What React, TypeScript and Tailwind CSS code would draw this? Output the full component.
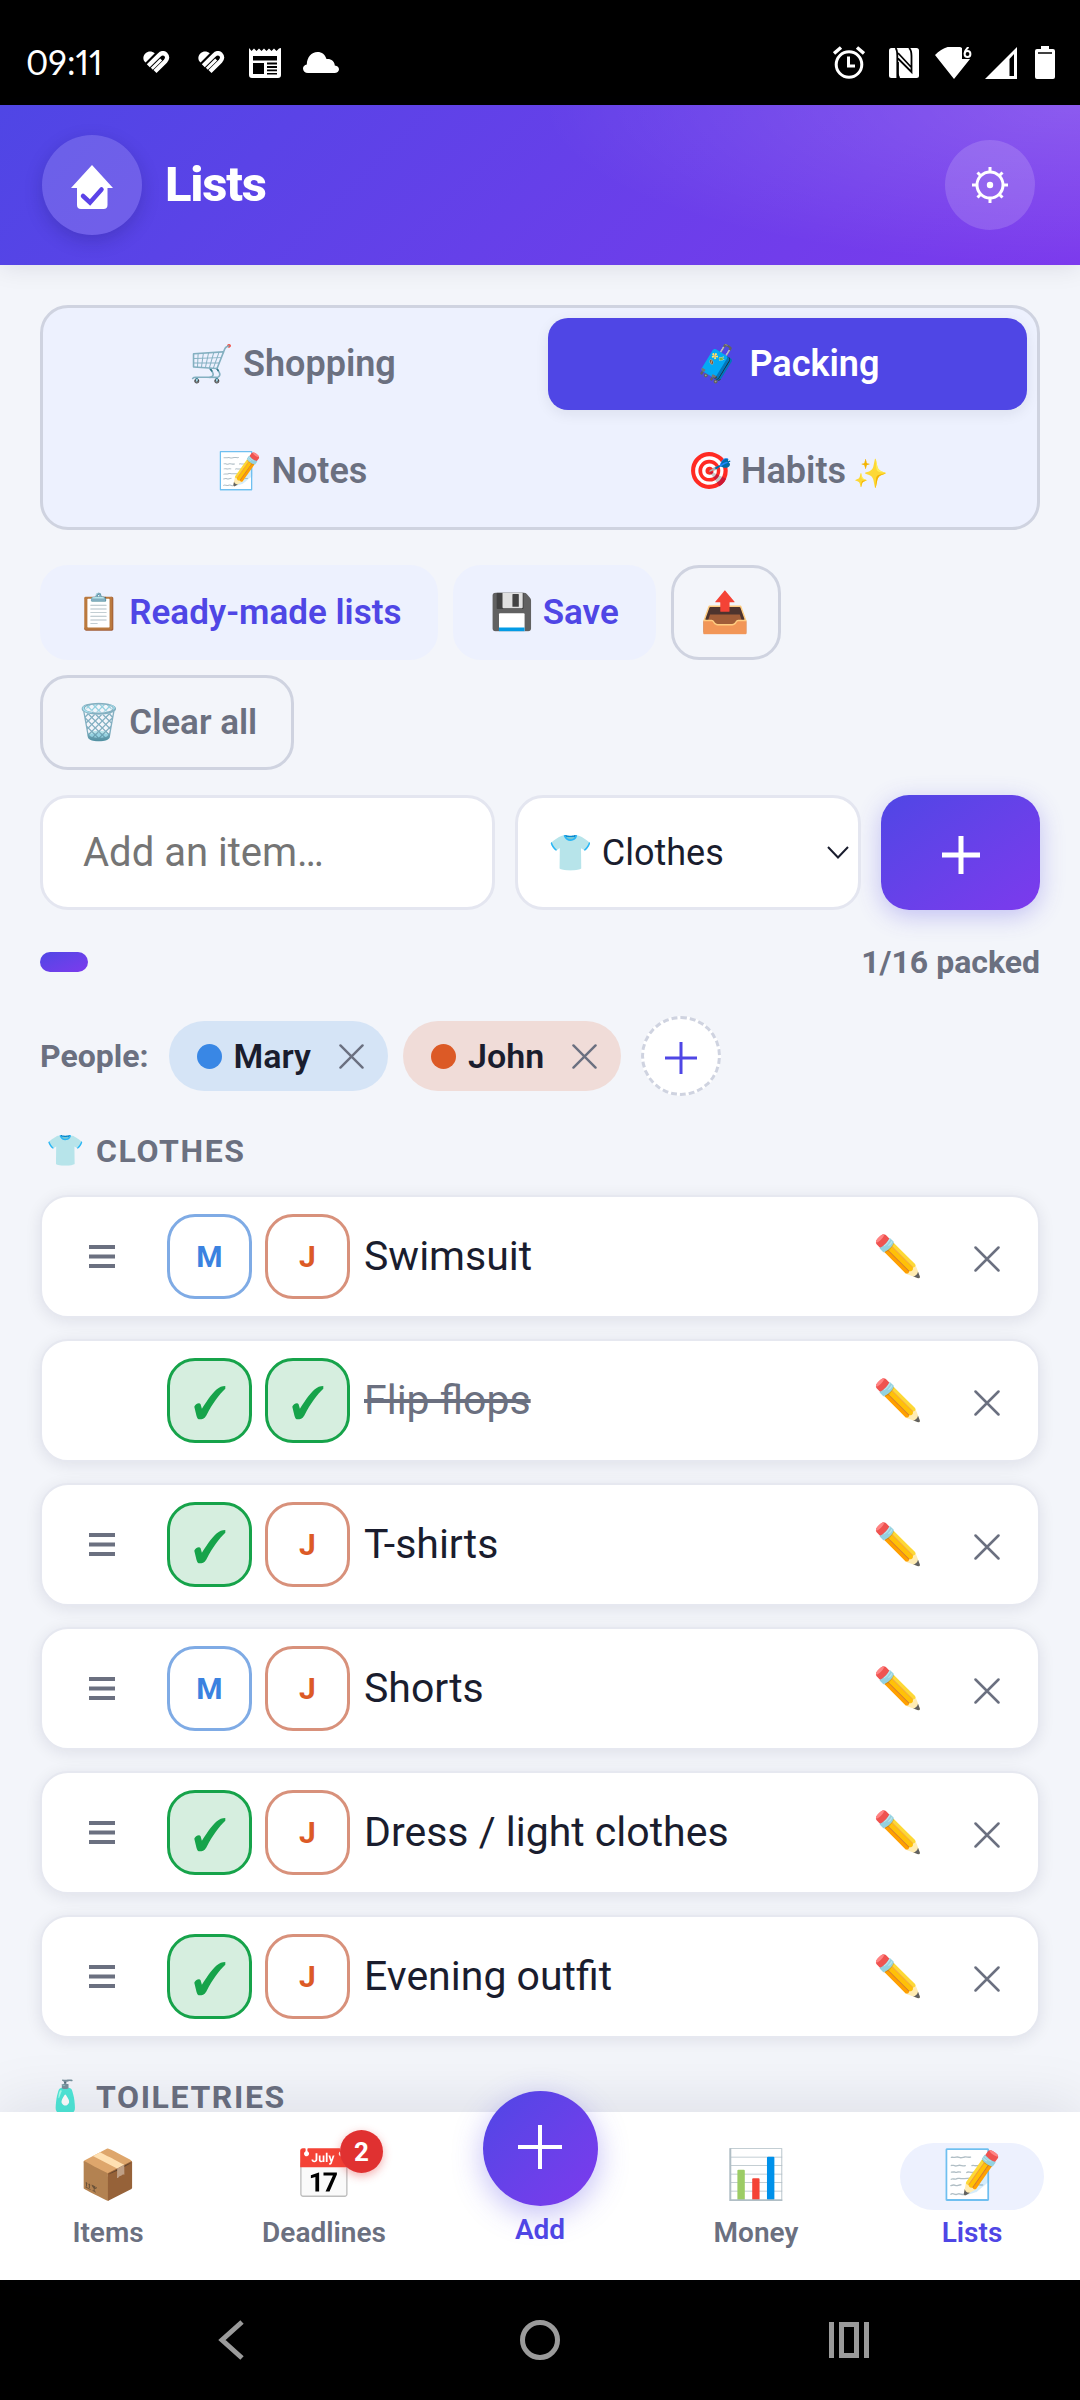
import { useState } from 'react';
import type { ReactNode } from 'react';
import { clsx } from 'clsx';

const TABS = [
  { id: 'shopping', icon: '🛒', label: 'Shopping' },
  { id: 'packing', icon: '🧳', label: 'Packing' },
  { id: 'notes', icon: '📝', label: 'Notes' },
  { id: 'habits', icon: '🎯', label: 'Habits', sparkle: true },
];

const CATEGORIES = ['👕 Clothes', '🧴 Toiletries', '🔌 Electronics', '📄 Documents'];

type Item = { name: string; mary: boolean; john: boolean };

const CLOTHES: Item[] = [
  { name: 'Swimsuit', mary: false, john: false },
  { name: 'Flip flops', mary: true, john: true },
  { name: 'T-shirts', mary: true, john: false },
  { name: 'Shorts', mary: false, john: false },
  { name: 'Dress / light clothes', mary: true, john: false },
  { name: 'Evening outfit', mary: true, john: false },
];

const TOTAL = 16;

const Cross = ({ size }: { size: number }) => (
  <svg width={size} height={size} viewBox="0 0 26 26" fill="none" stroke="currentColor" strokeWidth="2.5" strokeLinecap="round">
    <path d="M1.5 1.5 24.5 24.5M24.5 1.5 1.5 24.5" />
  </svg>
);

const Plus = ({ size, width }: { size: number; width: number }) => (
  <svg width={size} height={size} viewBox={`0 0 ${size} ${size}`} stroke="currentColor" strokeWidth={width}>
    <path d={`M${size / 2} 0V${size}M0 ${size / 2}H${size}`} />
  </svg>
);

const CheckMark = () => (
  <svg width="32" height="34" viewBox="0 0 32 34" fill="currentColor">
    <path d="M.3 20.800C1 18.300 5.500 15.800 6.600 18.300L7.900 22.800C12 16.500 17 8.500 22.500 3.600C25.500 .8 28 .2 31.300 0V2.800C25.500 8 18 18.500 13 28.300C10.800 32.600 9.300 33.300 6.500 33.300C3.600 33.300 3.300 32.500 2.400 29.500Z" />
  </svg>
);

/* Android status bar icons */
const HandHeart = () => (
  <svg width="27" height="24" viewBox="0 0 27 24" fill="none" stroke="#fff">
    <path d="M2.600 11.600C-.8 9 0 4.300 2.600 2.200C5.300-.2 8.800-.2 11.800 2.300Z" fill="#fff" stroke="none" />
    <path d="M5.300 14.700 16 4.200C18.500 1.700 21 1.800 22.800 3.400C24.700 5.300 24.500 8 22.400 10.200L12 20.600" strokeWidth="4.300" />
    <path d="M8.800 17.800 18.200 8.500" strokeWidth="2.900" />
  </svg>
);

const Newspaper = () => (
  <svg width="32" height="30" viewBox="0 0 32 30">
    <path d="M0 0 2.5 3 5 .5 7.5 3 10 .5 12.5 3 15 .5 17.5 3 20 .5 22.5 3 25 .5 27.5 3 30 .5 32 0V27Q32 30 29 30H3Q0 30 0 27Z" fill="#fff" />
    <path d="M4 8H28V12.5H4ZM4 15H15V26H4ZM18 14.5H28V16.5H18ZM18 18H28V20H18ZM18 21.5H28V23.3H18ZM18 25H28V26.5H18Z" fill="#000" />
  </svg>
);

const Cloud = () => (
  <svg width="36" height="21" viewBox="0 0 36 21" fill="#fff">
    <path d="M5 21C2 21 0 19 0 16.500C0 14.500 1.500 13 3.800 12.500C4 5 8.500 0 14.500 0C19 0 22 2.500 23.500 7C28 6.500 31.500 9 31.800 13.500C34.500 13.800 36 15.300 36 17.300C36 19.500 34 21 31.500 21Z" />
  </svg>
);

const StatusBar = () => (
  <div className="flex h-[105px] shrink-0 items-center justify-between bg-black pt-5 pl-[26px] pr-[25px] text-white">
    <div className="flex items-center">
      <span className="w-[90px] font-[Lato,sans-serif] text-[34px] proportional-nums">09:11</span>
      <span className="ml-[27px]"><HandHeart /></span>
      <span className="ml-7"><HandHeart /></span>
      <span className="ml-6"><Newspaper /></span>
      <span className="ml-[22px]"><Cloud /></span>
    </div>
    <div className="flex items-center">
      <svg width="32" height="33" viewBox="0 0 32 33" fill="none" stroke="#fff" strokeWidth="3">
        <circle cx="16" cy="18.500" r="12.800" />
        <path d="M15.500 10.500V20H22" />
        <path d="M1 7.500 8 1.500M31 7.500 24 1.500" strokeWidth="3.500" />
      </svg>
      <svg className="ml-6" width="30" height="30" viewBox="0 0 30 30">
        <rect width="30" height="30" rx="2.500" fill="#fff" />
        <path d="M6.500 0C8 1.500 8.300 4 8.300 8V30M20 0C22 1.500 22.500 4 22.500 8V24L9 10.500M9 5 22 19M9 14V26C9 28 9.500 29 10.500 30" fill="none" stroke="#000" strokeWidth="1.800" />
      </svg>
      <svg className="ml-4" width="38" height="32" viewBox="0 0 38 32">
        <path d="M0 8C9-2 22-2.500 27 1V12H35L19 32Z" fill="#fff" />
        <circle cx="32.500" cy="7" r="2.900" fill="none" stroke="#fff" strokeWidth="2" />
        <path d="M33.500 0C31 2 29.800 4 29.700 6.500" fill="none" stroke="#fff" strokeWidth="2" />
      </svg>
      <svg className="ml-3" width="32" height="32" viewBox="0 0 32 32">
        <path d="M32 0V32H0Z" fill="#fff" />
        <path d="M24.500 12 29 7V29H24.500Z" fill="#000" />
      </svg>
      <svg className="ml-[18px]" width="20" height="33" viewBox="0 0 20 33">
        <path d="M6 0H14V3H18Q20 3 20 5V31Q20 33 18 33H2Q0 33 0 31V5Q0 3 2 3H6Z" fill="#fff" />
        <path d="M3 7H17" stroke="#000" strokeWidth="1.500" />
      </svg>
    </div>
  </div>
);

const Header = () => (
  <header className="relative z-10 flex h-40 shrink-0 items-center justify-between bg-[radial-gradient(ellipse_50%_100%_at_100%_0%,rgba(255,255,255,0.16),transparent),linear-gradient(135deg,#4f46e5,#7c3aed)] pl-[42px] pr-[45px] text-white shadow-[0_2px_24px_rgba(20,24,50,0.1)]">
    <div className="flex items-center gap-[23px]">
      <div className="flex size-[100px] items-center justify-center rounded-full bg-white/15 shadow-[0_6px_18px_rgba(20,20,80,0.22)]">
        <svg className="mt-1" width="42" height="44" viewBox="0 0 42 44">
          <path d="M21 0 42 23H36.500V40Q36.500 44 32.500 44H10Q6 44 6 40V23H0Z" fill="#fff" />
          <path d="M12 31 19 37.500 30.500 24.500" fill="none" stroke="#5b43e8" strokeWidth="4.500" strokeLinecap="round" />
        </svg>
      </div>
      <h1 className="text-[49px] font-extrabold tracking-tight">Lists</h1>
    </div>
    <button className="flex size-[90px] items-center justify-center rounded-full bg-white/15" aria-label="Settings">
      <svg width="36" height="36" viewBox="-18 -18 36 36" fill="none" stroke="#fff" strokeWidth="3">
        <circle r="13" />
        <circle r="3.200" fill="#fff" stroke="none" />
        <path d="M0-18V-13M0 18V13M-18 0H-13M18 0H13M-12.500-12.500-9-9M12.500 12.500 9 9M-12.500 12.500-9 9M12.500-12.500 9-9" />
      </svg>
    </button>
  </header>
);

const ActionButton = ({ children, outlined, label }: { children: ReactNode; outlined?: boolean; label?: string }) => (
  <button
    aria-label={label}
    className={clsx(
      'h-[95px] rounded-[28px] border-3 font-semibold',
      outlined ? 'border-[#cfd3e0] text-[#6b7080]' : 'border-[#edf1fe] bg-[#edf1fe] text-[#4f46e5]',
      label ? 'px-[27px] text-[40px]' : 'px-[34px] text-[35px]',
    )}
  >
    {children}
  </button>
);

const PersonChip = ({ name, chip, dot }: { name: string; chip: string; dot: string }) => (
  <div className={clsx('flex h-[70px] items-center rounded-full pr-6 pl-7', chip)}>
    <span className={clsx('size-[25px] rounded-full', dot)} />
    <span className="ml-3 text-[34px] font-semibold text-[#1a1d2e]">{name}</span>
    <button className="ml-7 text-[#6b7080]" aria-label={`Remove ${name}`}>
      <Cross size={25} />
    </button>
  </div>
);

const PersonCheck = ({ person, color, checked, onChange }: { person: string; color: string; checked: boolean; onChange: () => void }) => (
  <label
    className={clsx(
      'flex size-[85px] items-center justify-center rounded-[28px] border-3 text-[30px] font-bold',
      checked ? 'border-[#16a34a] bg-[#d6eedf] text-[#16a34a]' : color,
    )}
  >
    <input type="checkbox" className="sr-only" aria-label={person} checked={checked} onChange={onChange} />
    {checked ? <span className="mt-1"><CheckMark /></span> : person[0]}
  </label>
);

const ItemRow = ({ item, onToggle }: { item: Item; onToggle: (who: 'mary' | 'john') => void }) => {
  const done = item.mary && item.john;
  return (
    <li className="flex h-[123px] items-center rounded-[28px] border-2 border-[#e6e8f0] bg-white pr-[38px] pl-[47px] shadow-[0_3px_16px_rgba(20,24,50,0.09)]">
      <button className={clsx('w-[26px]', done && 'invisible')} aria-label={`Move ${item.name}`}>
        <svg width="26" height="23" viewBox="0 0 26 23" stroke="#6b7080" strokeWidth="4">
          <path d="M0 2H26M0 11.500H26M0 21H26" />
        </svg>
      </button>
      <div className="ml-[52px] flex gap-[13px]">
        <PersonCheck person="Mary" color="border-[#7fabe5] text-[#3b82e0]" checked={item.mary} onChange={() => onToggle('mary')} />
        <PersonCheck person="John" color="border-[#d8917b] text-[#dc5a26]" checked={item.john} onChange={() => onToggle('john')} />
      </div>
      <span className={clsx('ml-[14px] flex-1 text-[41px]', done ? 'text-[#6b7080] line-through decoration-4' : 'text-[#1a1d2e]')}>{item.name}</span>
      <button className="text-[40px]" aria-label={`Edit ${item.name}`}>✏️</button>
      <button className="ml-[51px] pt-1 text-[#6b7080]" aria-label={`Delete ${item.name}`}>
        <Cross size={26} />
      </button>
    </li>
  );
};

const SectionTitle = ({ icon, children }: { icon: string; children: ReactNode }) => (
  <h2 className="flex h-7 items-center gap-[11px] pl-[6px] text-[32px] leading-7 font-bold text-[#6b7080]">
    <span className="w-[39px] text-center text-[31px] leading-7">{icon}</span>
    <span className="tracking-wider uppercase">{children}</span>
  </h2>
);

const NavItem = ({ icon, label, active, badge }: { icon: string; label: string; active?: boolean; badge?: number }) => (
  <a href="#" className={clsx('flex flex-col items-center pt-[31px]', active ? 'text-[#4f46e5]' : 'text-[#6b7080]')}>
    <span className={clsx('relative flex h-[67px] w-36 items-center justify-center rounded-full pb-[3px] text-5xl', active && 'bg-[#edf1fe]')}>
      {icon}
      {badge && (
        <span className="absolute -top-[13px] right-[13px] flex size-[43px] items-center justify-center rounded-full bg-[#e03131] text-[26px] font-bold text-white shadow-[0_3px_10px_rgba(224,49,49,0.4)]">
          {badge}
        </span>
      )}
    </span>
    <span className="mt-[5px] text-[28px] leading-9 font-semibold">{label}</span>
  </a>
);

const BottomNav = () => (
  <nav className="relative z-10 grid h-[168px] shrink-0 grid-cols-5 bg-white shadow-[0_-6px_60px_rgba(20,24,50,0.1)]">
    <NavItem icon="📦" label="Items" />
    <NavItem icon="📅" label="Deadlines" badge={2} />
    <button className="-mt-[21px] flex flex-col items-center text-[#4f46e5]">
      <span className="flex size-[115px] items-center justify-center rounded-full bg-linear-to-br from-[#4f46e5] to-[#7c3aed] pb-1 text-white shadow-[0_8px_30px_rgba(79,70,229,0.35)]">
        <Plus size={44} width={4} />
      </span>
      <span className="mt-[6px] text-[28px] leading-9 font-semibold">Add</span>
    </button>
    <NavItem icon="📊" label="Money" />
    <NavItem icon="📝" label="Lists" active />
  </nav>
);

const SystemBar = () => (
  <div className="grid h-[120px] shrink-0 grid-cols-3 place-items-center bg-black px-[76px] text-[#9b9b9b]">
    <button aria-label="Back">
      <svg width="26" height="40" viewBox="0 0 26 40" fill="none" stroke="currentColor" strokeWidth="5">
        <path d="M24 2 4 20 24 38" />
      </svg>
    </button>
    <button aria-label="Home">
      <svg width="40" height="40" viewBox="0 0 40 40" fill="none" stroke="currentColor" strokeWidth="5">
        <circle cx="20" cy="20" r="17.500" />
      </svg>
    </button>
    <button aria-label="Recent apps">
      <svg width="40" height="36" viewBox="0 0 40 36" fill="none" stroke="currentColor" strokeWidth="5">
        <path d="M2.500 0V36M37.500 0V36M12.500 2.500H27.500V33.500H12.500Z" />
      </svg>
    </button>
  </div>
);

export default function App() {
  const [tab, setTab] = useState('packing');
  const [items, setItems] = useState(CLOTHES);
  const packed = items.filter((i) => i.mary && i.john).length;

  const toggle = (index: number, who: 'mary' | 'john') =>
    setItems(items.map((it, i) => (i === index ? { ...it, [who]: !it[who] } : it)));

  return (
    <div className="flex h-dvh flex-col bg-[#f3f5fa] font-[Roboto,'Noto_Color_Emoji',sans-serif] leading-tight">
      <StatusBar />
      <Header />

      <main className="min-h-0 flex-1 overflow-hidden px-10 pt-10">
        <div role="tablist" className="grid grid-cols-2 gap-x-4 gap-y-[15px] rounded-[28px] border-3 border-[#cfd3e0] bg-[#edf1fe] p-[10px]">
          {TABS.map((t) => (
            <button
              key={t.id}
              role="tab"
              aria-selected={t.id === tab}
              onClick={() => setTab(t.id)}
              className={clsx(
                'h-[92px] rounded-[20px] text-4xl font-semibold',
                t.id === tab ? 'bg-[#4f46e5] text-white shadow-[0_4px_14px_rgba(20,24,50,0.08)]' : 'text-[#6b7080]',
              )}
            >
              {t.icon} {t.label}
              {t.sparkle && <span className="text-[28px]"> ✨</span>}
            </button>
          ))}
        </div>

        <div className="mt-[35px] flex flex-wrap gap-[15px]">
          <ActionButton>📋 Ready-made lists</ActionButton>
          <ActionButton>💾 Save</ActionButton>
          <ActionButton outlined label="Share">📤</ActionButton>
          <ActionButton outlined>🗑️ Clear all</ActionButton>
        </div>

        {/* Add item form */}
        <form className="mt-[25px] flex h-[115px] gap-5" onSubmit={(e) => e.preventDefault()}>
          <input
            aria-label="Add an item"
            placeholder="Add an item…"
            className="min-w-0 flex-1 rounded-[28px] border-3 border-[#e4e6f0] bg-white px-10 text-[40px] placeholder:text-[#757575]"
          />
          <div className="relative w-[346px]">
            <select
              aria-label="Category"
              className="size-full appearance-none rounded-[28px] border-3 border-[#e4e6f0] bg-white pl-[30px] text-4xl text-[#1a1d2e]"
            >
              {CATEGORIES.map((c) => (
                <option key={c}>{c}</option>
              ))}
            </select>
            <svg className="pointer-events-none absolute top-[51px] right-3" width="22" height="13" viewBox="0 0 22 13" fill="none" stroke="#1a1d2e" strokeWidth="2">
              <path d="M1 1 11 11.500 21 1" />
            </svg>
          </div>
          <button
            aria-label="Add"
            className="flex w-[159px] items-center justify-center rounded-[28px] bg-linear-to-br from-[#4f46e5] to-[#7c3aed] pt-1 text-white shadow-[0_6px_24px_rgba(79,70,229,0.3)]"
          >
            <Plus size={38} width={5} />
          </button>
        </form>

        <div className="mt-8 flex h-10 items-center gap-12">
          <div className="h-5 flex-1 rounded-full">
            <div className="h-full rounded-full bg-linear-to-br from-[#4f46e5] to-[#7c3aed]" style={{ width: `${(packed / TOTAL) * 100}%` }} />
          </div>
          <span className="text-[32px] font-bold text-[#6b7080]">{packed}/{TOTAL} packed</span>
        </div>

        <div className="mt-[34px] flex items-center">
          <span className="mr-5 text-[32px] font-bold text-[#6b7080]">People:</span>
          <div className="flex items-center gap-[15px]">
            <PersonChip name="Mary" chip="bg-[#d5e4f6]" dot="bg-[#3987e5]" />
            <PersonChip name="John" chip="bg-[#f0dcd8]" dot="bg-[#dc5a26]" />
          </div>
          <button className="ml-5 flex size-20 items-center justify-center rounded-full border-3 border-dashed border-[#cfd3e0] bg-white pt-1 text-[#4f46e5]" aria-label="Add person">
            <Plus size={32} width={3} />
          </button>
        </div>

        <section className="mt-[41px]">
          <SectionTitle icon="👕">Clothes</SectionTitle>
          <ul className="mt-[30px] flex flex-col gap-[21px]">
            {items.map((item, i) => (
              <ItemRow key={item.name} item={item} onToggle={(who) => toggle(i, who)} />
            ))}
          </ul>
        </section>

        <section className="mt-[45px]">
          <SectionTitle icon="🧴">Toiletries</SectionTitle>
        </section>
      </main>

      <BottomNav />
      <SystemBar />
    </div>
  );
}
